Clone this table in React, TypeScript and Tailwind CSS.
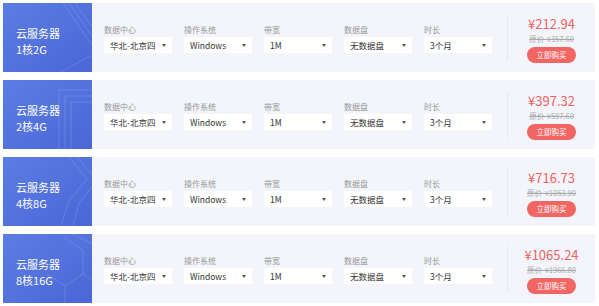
import React from "react";

interface Plan {
  id: number;
  spec: string;
  price: string;
  original: string;
  deco: "lines" | "rects" | "chevron" | "hex";
}

const plans: Plan[] = [
  { id: 1, spec: "1核2G", price: "¥212.94", original: "原价-¥357.60", deco: "lines" },
  { id: 2, spec: "2核4G", price: "¥397.32", original: "原价-¥597.60", deco: "rects" },
  { id: 3, spec: "4核8G", price: "¥716.73", original: "原价-¥1053.90", deco: "chevron" },
  { id: 4, spec: "8核16G", price: "¥1065.24", original: "原价-¥1966.80", deco: "hex" },
];

const fields = [
  { label: "数据中心", value: "华北-北京四" },
  { label: "操作系统", value: "Windows" },
  { label: "带宽", value: "1M" },
  { label: "数据盘", value: "无数据盘" },
  { label: "时长", value: "3个月" },
];

// faint line art in the blue card corner
function Deco({ kind }: { kind: Plan["deco"] }) {
  return (
    <svg className="absolute inset-0" width="89" height="69" viewBox="0 0 89 69">
      <g fill="none" stroke="#ffffff" strokeOpacity="0.14" strokeWidth="1">
        {kind === "lines" && (
          <>
            <path d="M60 0 L89 42" />
            <path d="M66 0 L89 33" />
            <path d="M72 0 L89 24" />
            <path d="M58 69 L89 52" />
          </>
        )}
        {kind === "rects" && (
          <>
            <path d="M56 10 H89 M56 10 V69" />
            <path d="M62 16 H89 M62 16 V69" />
            <path d="M68 22 H89 M68 22 V69" />
          </>
        )}
        {kind === "chevron" && (
          <>
            <path d="M66 0 L84 22 L66 44 L58 69" />
            <path d="M74 0 L89 18" />
            <path d="M89 30 L76 46 L70 69" />
          </>
        )}
        {kind === "hex" && (
          <>
            <path d="M62 4 L80 16 L80 40 L62 52 L44 40" />
            <path d="M89 10 L70 0" />
            <path d="M80 40 L89 46" />
            <path d="M62 52 L62 69" />
          </>
        )}
      </g>
    </svg>
  );
}

function Select({ value }: { value: string }) {
  return (
    <div className="flex h-[16px] w-[68px] items-center justify-between bg-white pl-[6px] pr-[6px] text-[8.5px] leading-[16px] text-[#333]">
      <span>{value}</span>
      <span className="h-0 w-0 border-l-[2.5px] border-r-[2.5px] border-t-[3px] border-l-transparent border-r-transparent border-t-[#555]" />
    </div>
  );
}

function PlanRow({ plan }: { plan: Plan }) {
  return (
    <div className="flex h-[69px]">
      <div className="relative w-[89px] overflow-hidden bg-gradient-to-br from-[#5c7de3] to-[#4a67d6]">
        <Deco kind={plan.deco} />
        <div className="relative pl-[13px] pt-[22px] text-[11px] leading-[16px] text-white">
          <div>云服务器</div>
          <div>{plan.spec}</div>
        </div>
      </div>
      <div className="flex flex-1 items-start bg-[#f3f5fa]">
        <div className="flex gap-[12px] pl-[12px] pt-[21px]">
          {fields.map((f) => (
            <div key={f.label} className="w-[68px]">
              <div className="mb-[2px] text-[8px] leading-[11px] text-[#999]">{f.label}</div>
              <Select value={f.value} />
            </div>
          ))}
        </div>
        <div className="ml-[15px] mt-[12px] h-[46px] border-l border-[#e4e7ef]" />
        <div className="flex flex-1 flex-col items-center pt-[13px]">
          <div className="text-[13px] leading-[16px] text-[#ef625f]">{plan.price}</div>
          <div className="mt-[1px] text-[7.5px] leading-[11px] text-[#aaa] line-through">{plan.original}</div>
          <button className="mt-[3px] h-[16px] w-[49px] rounded-full bg-[#f16662] text-[7.5px] leading-[16px] text-white">
            立即购买
          </button>
        </div>
      </div>
    </div>
  );
}

export default function App() {
  return (
    <div
      className="flex h-[306px] w-[599px] flex-col gap-[8px] bg-white pl-[3px] pr-[4px] pt-[3px]"
      style={{ fontFamily: '"Noto Sans CJK SC", "Noto Sans", sans-serif' }}
    >
      {plans.map((p) => (
        <PlanRow key={p.id} plan={p} />
      ))}
    </div>
  );
}
